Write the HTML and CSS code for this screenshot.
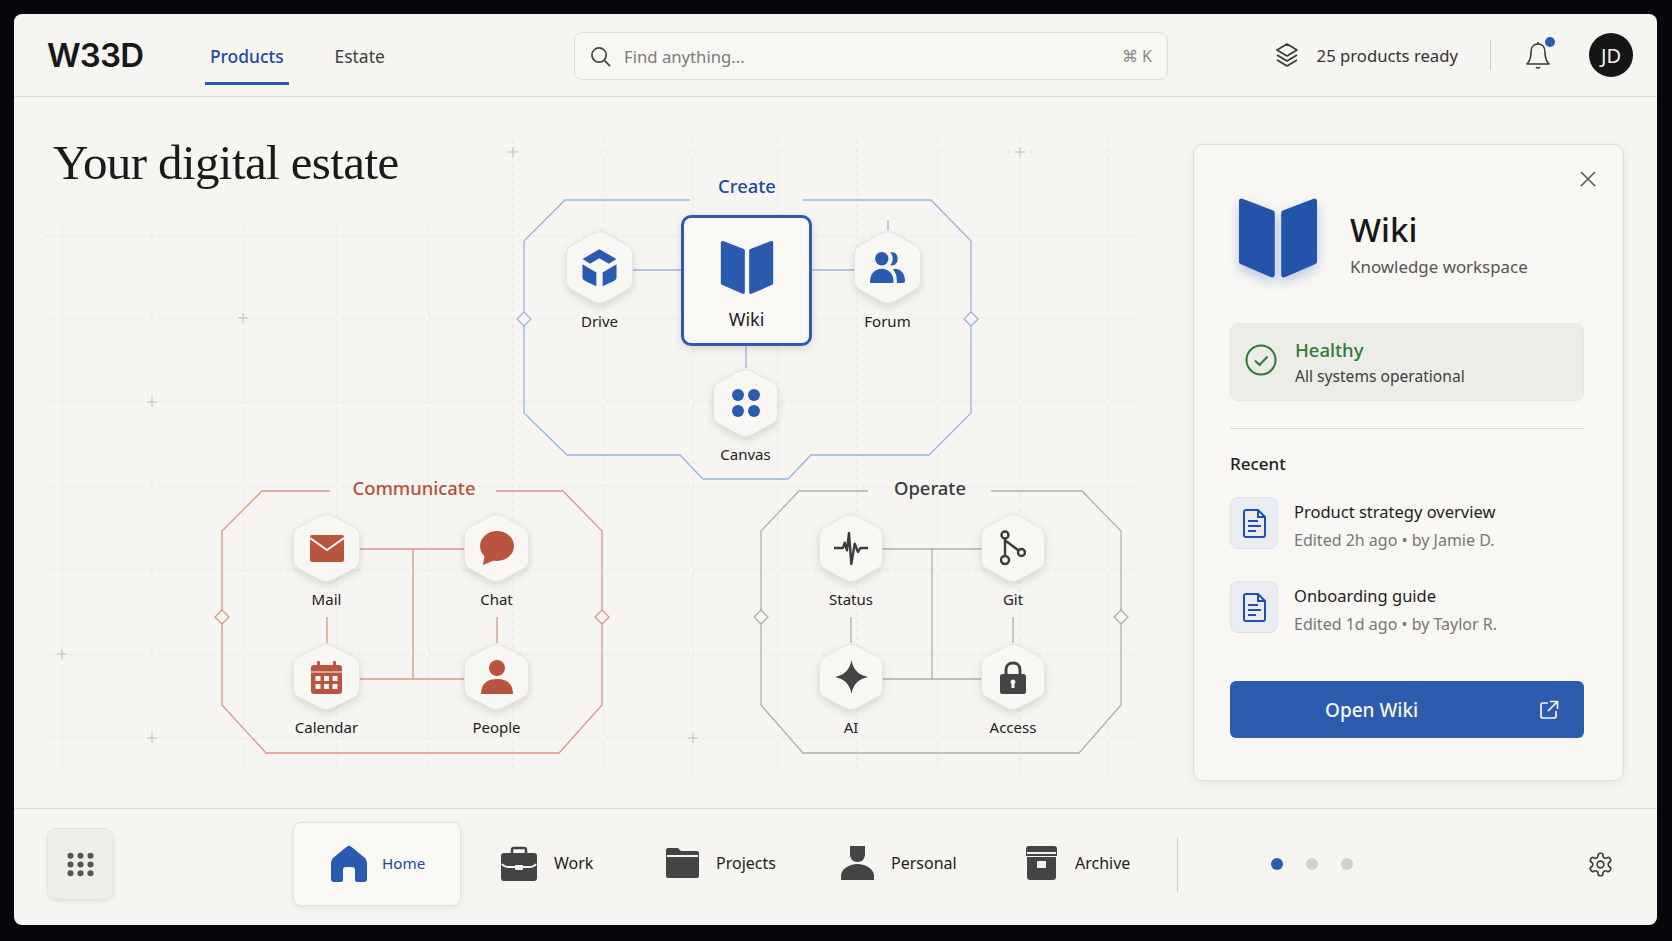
FILE: index.html
```html
<!DOCTYPE html>
<html lang="en">
<head>
    <meta charset="UTF-8">
    <meta name="viewport" content="width=device-width, initial-scale=1.0">
    <title>W33D - Your digital estate</title>
    <link rel="stylesheet" href="styles.css">
</head>
<body>
    <svg class="defs" width="0" height="0" aria-hidden="true">
        <defs>
            <symbol id="hex" viewBox="0 0 67 76" preserveAspectRatio="none">
                <path d="M28 3Q33.500 0 39 3L62 16Q66.500 19 66.500 24V52Q66.500 57 62 60L39 73Q33.500 76 28 73L5 60Q.5 57 .5 52V24Q.5 19 5 16Z"/>
            </symbol>
            <symbol id="book" viewBox="0 0 161 165">
                <path d="M7 8L69 32V157L7 130Z"/>
                <path d="M92 32L154 8V130L92 157Z"/>
            </symbol>
            <symbol id="doc" viewBox="0 0 23 29">
                <path d="M3 1H15L22 8V26Q22 28 20 28H3Q1 28 1 26V3Q1 1 3 1Z"/>
                <path d="M15 1V8H22M5 12H15M5 17H18M5 22H13"/>
            </symbol>
            <g id="plus-col">
                <path d="M-5 236H5M0 231V241M-5 318H5M0 313V323M-5 402H5M0 397V407M-5 486H5M0 481V491M-5 570H5M0 565V575M-5 654H5M0 649V659M-5 738H5M0 733V743"/>
            </g>
        </defs>
    </svg>

    <div class="frame">
        <header class="topbar">
            <div class="logo">W33D</div>
            <nav class="topnav">
                <a class="topnav-link active">Products</a>
                <a class="topnav-link">Estate</a>
            </nav>
            <div class="search">
                <svg class="search-icon" viewBox="0 0 22 22"><circle cx="9.500" cy="9.500" r="7.500"/><path d="M15 15L21 21"/></svg>
                <span class="search-text">Find anything...</span>
                <span class="search-key">⌘ K</span>
            </div>
            <div class="topbar-right">
                <svg class="layers-icon" viewBox="0 0 24 24"><path d="M12 1L22 7L12 13L2 7Z"/><path d="M2 12L12 18L22 12"/><path d="M2 17L12 23L22 17"/></svg>
                <span class="ready">25 products ready</span>
                <span class="topbar-sep"></span>
                <div class="bell">
                    <svg class="bell-icon" viewBox="0 0 24 28"><path d="M5 11C5 6 8 3 12 3S19 6 19 11C19 18 21 21 23 23H1C3 21 5 18 5 11Z"/><path d="M12 1V3M10 26Q12 28 14 26"/></svg>
                    <span class="bell-dot"></span>
                </div>
                <div class="avatar">JD</div>
            </div>
        </header>

        <main class="main">
            <section class="canvas">
                <h1 class="title">Your digital estate</h1>

                <svg class="wires" viewBox="14 97 1179 711">
                    <g class="grid">
                        <path d="M45 236H1143M45 318H1143M45 402H1143M45 486H1143M45 570H1143M45 654H1143M45 738H1143M470 152H1143"/>
                        <path d="M62 225V770M152 225V785M243 225V770M337 225V770M429 225V770M513 140V770M603 140V770M693 140V780M778 140V770M857 140V770M938 140V770M1020 140V780M1108 140V780"/>
                    </g>
                    <g class="plus">
                        <use href="#plus-col" x="62"/><use href="#plus-col" x="152"/><use href="#plus-col" x="243"/>
                        <use href="#plus-col" x="337"/><use href="#plus-col" x="429"/><use href="#plus-col" x="1108"/>
                        <use href="#plus-col" x="1020"/>
                    </g>
                    <path class="plus-strong" d="M238 318H248M243 313V323M147 402H157M152 397V407M57 654H67M62 649V659M147 738H157M152 733V743M508 152H518M513 147V157M1015 152H1025M1020 147V157M688 738H698M693 733V743"/>

                    <g class="wire-create">
                        <path d="M690 200H565L524 241V413L567 455H680L703 479H788L811 455H929L971 413V241L931 200H803"/>
                        <path d="M633 270H681M812 270H854M746 346V368M888 220V230"/>
                        <path class="pin" d="M524 312L531 319L524 326L517 319Z"/>
                        <path class="pin" d="M971 312L978 319L971 326L964 319Z"/>
                    </g>
                    <g class="wire-communicate">
                        <path d="M330 491H262L222 531V705L266 753H559L602 705V531L563 491H496"/>
                        <path d="M360 549H464M360 679H464M413 549V679M327 617V643M497 617V643"/>
                        <path class="pin" d="M222 610L229 617L222 624L215 617Z"/>
                        <path class="pin" d="M602 610L609 617L602 624L595 617Z"/>
                    </g>
                    <g class="wire-operate">
                        <path d="M868 491H799L761 531V705L803 753H1079L1121 705V531L1082 491H991"/>
                        <path d="M883 549H981M883 679H981M932 549V679M851 617V643M1013 617V643"/>
                        <path class="pin" d="M761 610L768 617L761 624L754 617Z"/>
                        <path class="pin" d="M1121 610L1128 617L1121 624L1114 617Z"/>
                    </g>
                </svg>

                <div class="group-title title-create">Create</div>
                <div class="group-title title-communicate">Communicate</div>
                <div class="group-title title-operate">Operate</div>

                <a class="wiki-card">
                    <svg class="wiki-book"><use href="#book"/></svg>
                    <span class="wiki-label">Wiki</span>
                </a>

                <a class="node tall blue node-drive">
                    <span class="hex-box">
                        <svg class="hex"><use href="#hex"/></svg>
                        <svg class="glyph g-drive" viewBox="0 0 105 115"><path d="M52 1L104 30L81 45L52 28L24 45L1 30Z"/><path d="M1 46L43 71V113L12 98Q1 93 1 86Z"/><path d="M104 46L62 71V113L93 98Q104 93 104 86Z"/></svg>
                    </span>
                    <span class="node-label">Drive</span>
                </a>
                <a class="node tall blue node-forum">
                    <span class="hex-box">
                        <svg class="hex"><use href="#hex"/></svg>
                        <svg class="glyph g-forum" viewBox="0 0 104 92"><circle cx="35" cy="20" r="20"/><path d="M3 92Q0 92 0 88C0 65 15 50 35 50S70 65 70 88Q70 92 67 92Z"/><path d="M60 1C75-2 82 8 82 20S75 42 60 39C70 30 70 10 60 1Z"/><path d="M76 50C95 52 104 68 104 86Q104 92 98 92H80C80 75 78 62 68 52Z"/></svg>
                    </span>
                    <span class="node-label">Forum</span>
                </a>
                <a class="node blue node-canvas">
                    <span class="hex-box">
                        <svg class="hex"><use href="#hex"/></svg>
                        <svg class="glyph g-dots" viewBox="0 0 28 28"><circle cx="6" cy="6" r="6"/><circle cx="22" cy="6" r="6"/><circle cx="6" cy="22" r="6"/><circle cx="22" cy="22" r="6"/></svg>
                    </span>
                    <span class="node-label">Canvas</span>
                </a>

                <a class="node red node-mail">
                    <span class="hex-box">
                        <svg class="hex"><use href="#hex"/></svg>
                        <svg class="glyph g-mail" viewBox="0 0 34 27"><rect width="34" height="27" rx="2"/><path class="cut" d="M0 3L17 15L34 3"/></svg>
                    </span>
                    <span class="node-label">Mail</span>
                </a>
                <a class="node red node-chat">
                    <span class="hex-box">
                        <svg class="hex"><use href="#hex"/></svg>
                        <svg class="glyph g-chat" viewBox="0 0 34 34"><ellipse cx="17" cy="15" rx="17" ry="15"/><path d="M5 22L3 34L15 29Z"/></svg>
                    </span>
                    <span class="node-label">Chat</span>
                </a>
                <a class="node red low node-calendar">
                    <span class="hex-box">
                        <svg class="hex"><use href="#hex"/></svg>
                        <svg class="glyph g-calendar" viewBox="0 0 31 33"><rect y="4" width="31" height="29" rx="3"/><rect x="6" width="3" height="7" rx="1"/><rect x="22" width="3" height="7" rx="1"/><path class="cut thin" d="M0 11H31"/><g class="cut-fill"><rect x="4.500" y="15" width="5" height="5"/><rect x="13" y="15" width="5" height="5"/><rect x="21.500" y="15" width="5" height="5"/><rect x="4.500" y="23" width="5" height="5"/><rect x="13" y="23" width="5" height="5"/><rect x="21.500" y="23" width="5" height="5"/></g></svg>
                    </span>
                    <span class="node-label">Calendar</span>
                </a>
                <a class="node red low node-people">
                    <span class="hex-box">
                        <svg class="hex"><use href="#hex"/></svg>
                        <svg class="glyph g-people" viewBox="0 0 32 34"><circle cx="16" cy="8" r="8"/><path d="M0 34C0 23 7 19 16 19S32 23 32 34Z"/></svg>
                    </span>
                    <span class="node-label">People</span>
                </a>

                <a class="node dark node-status">
                    <span class="hex-box">
                        <svg class="hex"><use href="#hex"/></svg>
                        <svg class="glyph g-status" viewBox="0 0 34 33"><path d="M0 16H9L10.700 10.700L13 18.300L15 1L17.300 32L20.700 11.700L24 20L26.300 16H34"/></svg>
                    </span>
                    <span class="node-label">Status</span>
                </a>
                <a class="node dark node-git">
                    <span class="hex-box">
                        <svg class="hex"><use href="#hex"/></svg>
                        <svg class="glyph g-git" viewBox="0 0 26 36"><circle cx="5" cy="5" r="3.500"/><circle cx="5" cy="30" r="4"/><circle cx="21.500" cy="22.500" r="3.500"/><path d="M5 8.500V26M6 11L18.500 20.500"/></svg>
                    </span>
                    <span class="node-label">Git</span>
                </a>
                <a class="node dark low node-ai">
                    <span class="hex-box">
                        <svg class="hex"><use href="#hex"/></svg>
                        <svg class="glyph g-ai" viewBox="0 0 33 34"><path d="M16.500 0C18 10 24 15 33 17C24 19 18 24 16.500 34C15 24 9 19 0 17C9 15 15 10 16.500 0Z"/></svg>
                    </span>
                    <span class="node-label">AI</span>
                </a>
                <a class="node dark low node-access">
                    <span class="hex-box">
                        <svg class="hex"><use href="#hex"/></svg>
                        <svg class="glyph g-lock" viewBox="0 0 26 33"><path class="shackle" d="M6 14V8.500C6 4.500 9 2 13 2S20 4.500 20 8.500V14"/><rect y="13" width="26" height="20" rx="2.500"/><path class="cut-fill" d="M13 18.500A2.500 2.500 0 0 1 14.500 23V27H11.500V23A2.500 2.500 0 0 1 13 18.500Z"/></svg>
                    </span>
                    <span class="node-label">Access</span>
                </a>
            </section>

            <aside class="panel">
                <svg class="panel-close" viewBox="0 0 16 16"><path d="M1 1L15 15M15 1L1 15"/></svg>
                <div class="panel-head">
                    <svg class="panel-book"><use href="#book"/></svg>
                    <div>
                        <h2 class="panel-name">Wiki</h2>
                        <div class="panel-sub">Knowledge workspace</div>
                    </div>
                </div>
                <div class="health">
                    <svg class="health-icon" viewBox="0 0 32 32"><circle cx="16" cy="16" r="14.500"/><path d="M10 16.500L14.500 21L22.500 12.500"/></svg>
                    <div>
                        <div class="health-title">Healthy</div>
                        <div class="health-sub">All systems operational</div>
                    </div>
                </div>
                <hr class="panel-rule">
                <div class="recent-head">Recent</div>
                <div class="recent-item">
                    <span class="doc-tile"><svg class="doc-icon"><use href="#doc"/></svg></span>
                    <div>
                        <div class="recent-title">Product strategy overview</div>
                        <div class="recent-meta">Edited 2h ago • by Jamie D.</div>
                    </div>
                </div>
                <div class="recent-item">
                    <span class="doc-tile"><svg class="doc-icon"><use href="#doc"/></svg></span>
                    <div>
                        <div class="recent-title">Onboarding guide</div>
                        <div class="recent-meta">Edited 1d ago • by Taylor R.</div>
                    </div>
                </div>
                <button class="open-btn" type="button">
                    <span class="open-text">Open Wiki</span>
                    <svg class="open-icon" viewBox="0 0 20 20"><path d="M9 3H4Q2 3 2 5V16Q2 18 4 18H15Q17 18 17 16V11"/><path d="M11 1.500H18.500V9M18 2L9 11"/></svg>
                </button>
            </aside>
        </main>

        <footer class="dock">
            <button class="apps-btn" type="button" aria-label="Apps">
                <svg class="apps-icon" viewBox="0 0 31 28"><circle cx="4" cy="4" r="3.500"/><circle cx="15.500" cy="4" r="3.500"/><circle cx="27" cy="4" r="3.500"/><circle cx="4" cy="14" r="3.500"/><circle cx="15.500" cy="14" r="3.500"/><circle cx="27" cy="14" r="3.500"/><circle cx="4" cy="24" r="3.500"/><circle cx="15.500" cy="24" r="3.500"/><circle cx="27" cy="24" r="3.500"/></svg>
            </button>
            <a class="tab tab-home">
                <svg class="tab-icon" viewBox="0 0 36 37"><path d="M16 1.500Q18 0 20 1.500L34 13Q36 15 36 18V34Q36 37 33 37H26Q24 37 24 35V25Q24 22 21 22H15Q12 22 12 25V35Q12 37 10 37H3Q0 37 0 34V18Q0 15 2 13Z"/></svg>
                <span>Home</span>
            </a>
            <a class="tab tab-work">
                <svg class="tab-icon" viewBox="0 0 36 35"><path class="handle" d="M11 8V4Q11 2 13 2H23Q25 2 25 4V8"/><rect y="7" width="36" height="28" rx="3"/><path class="cut" d="M1 18Q3 21 8 21H28Q33 21 35 18"/><rect class="cut-fill" x="14" y="19" width="8" height="5" rx="1"/></svg>
                <span>Work</span>
            </a>
            <a class="tab tab-projects">
                <svg class="tab-icon" viewBox="0 0 33 30"><path d="M2 0H12L15 3H31Q33 3 33 5V28Q33 30 31 30H2Q0 30 0 28V2Q0 0 2 0Z"/><path class="cut" d="M1 8H32"/></svg>
                <span>Projects</span>
            </a>
            <a class="tab tab-personal">
                <svg class="tab-icon" viewBox="0 0 33 34"><path d="M9 0H24V8C24 13 21 16 16.500 16S9 13 9 8Z"/><path d="M0 34V30C0 23 8 18 16.500 18S33 23 33 30V34Z"/></svg>
                <span>Personal</span>
            </a>
            <a class="tab tab-archive">
                <svg class="tab-icon" viewBox="0 0 31 34"><path d="M3 0H28Q31 0 31 3V10H0V3Q0 0 3 0Z"/><path d="M1 11H30V31Q30 34 27 34H4Q1 34 1 31Z"/><path class="cut" d="M1 7H30"/><rect class="cut-fill" x="11" y="15" width="9" height="7" rx="1"/></svg>
                <span>Archive</span>
            </a>
            <span class="dock-sep"></span>
            <div class="pager">
                <span class="pager-dot active"></span>
                <span class="pager-dot"></span>
                <span class="pager-dot"></span>
            </div>
            <svg class="gear" viewBox="0 0 24 24"><path d="M12.220 2h-.44a2 2 0 0 0-2 2v.18a2 2 0 0 1-1 1.730l-.43.25a2 2 0 0 1-2 0l-.15-.08a2 2 0 0 0-2.730.73l-.22.38a2 2 0 0 0 .73 2.730l.15.1a2 2 0 0 1 1 1.720v.51a2 2 0 0 1-1 1.740l-.15.09a2 2 0 0 0-.73 2.730l.22.38a2 2 0 0 0 2.730.73l.15-.08a2 2 0 0 1 2 0l.43.25a2 2 0 0 1 1 1.730V20a2 2 0 0 0 2 2h.44a2 2 0 0 0 2-2v-.18a2 2 0 0 1 1-1.730l.43-.25a2 2 0 0 1 2 0l.15.08a2 2 0 0 0 2.730-.73l.22-.39a2 2 0 0 0-.73-2.730l-.15-.08a2 2 0 0 1-1-1.740v-.5a2 2 0 0 1 1-1.740l.15-.09a2 2 0 0 0 .73-2.730l-.22-.38a2 2 0 0 0-2.730-.73l-.15.08a2 2 0 0 1-2 0l-.43-.25a2 2 0 0 1-1-1.730V4a2 2 0 0 0-2-2z"/><circle cx="12" cy="12" r="3"/></svg>
        </footer>
    </div>
</body>
</html>
```

FILE: styles.css
```css
* {
    box-sizing: border-box;
}

html,
body {
    height: 100%;
}

body {
    margin: 0;
    padding: 14px 15px 16px 14px;
    background-color: #05070a;
    color: #1c1c1c;
    font-family: "Noto Sans", Arial, sans-serif;
    overflow: hidden;
}

.defs {
    display: block;
}

.frame {
    display: flex;
    flex-direction: column;
    height: 911px;
    background-color: #f7f5f1;
    border-radius: 8px;
    overflow: hidden;
}

/* top bar */
.topbar {
    display: flex;
    align-items: center;
    flex: none;
    height: 83px;
    padding: 0 24px 0 33px;
    border-bottom: 1px solid #e0ddd8;
}

.logo {
    width: 158px;
    font-family: Inter, sans-serif;
    font-size: 33px;
    font-weight: 600;
    letter-spacing: -0.8px;
    color: #181818;
}

.topnav {
    display: flex;
    align-self: stretch;
    gap: 41px;
    width: 369px;
}

.topnav-link {
    display: flex;
    align-items: center;
    height: 71px;
    padding: 16px 5px 0;
    font-size: 17.400px;
    color: #3d3d3d;
    border-bottom: 3px solid transparent;
}

.topnav-link.active {
    color: #1d49a8;
    font-weight: 500;
    border-bottom-color: #2a5bb5;
}

.search {
    display: flex;
    align-items: center;
    width: 594px;
    height: 48px;
    margin-top: 2px;
    padding: 0 15px;
    background-color: #f9f7f4;
    border: 1px solid #e2dfda;
    border-radius: 8px;
}

.search-icon {
    width: 21px;
    height: 21px;
    fill: none;
    stroke: #444;
    stroke-width: 1.8;
}

.search-text {
    margin-left: 13px;
    font-size: 16.700px;
    color: #7c7c7a;
}

.search-key {
    margin-left: auto;
    font-size: 16px;
    color: #8a8a88;
}

.topbar-right {
    display: flex;
    align-items: center;
    margin-left: auto;
}

.layers-icon {
    width: 24px;
    height: 24px;
    fill: none;
    stroke: #3a3a3a;
    stroke-width: 1.7;
    stroke-linejoin: round;
}

.ready {
    margin-left: 18px;
    font-size: 16.700px;
    color: #333;
}

.topbar-sep {
    width: 1px;
    height: 30px;
    margin-left: 32px;
    background-color: #cfccc7;
}

.bell {
    position: relative;
    width: 28px;
    height: 28px;
    margin-left: 35px;
}

.bell-icon {
    width: 24px;
    height: 28px;
    fill: none;
    stroke: #3a3a3a;
    stroke-width: 1.6;
    stroke-linejoin: round;
}

.bell-dot {
    position: absolute;
    top: -4px;
    right: -1px;
    width: 10px;
    height: 10px;
    border-radius: 50%;
    background-color: #2a5bb5;
}

.avatar {
    display: flex;
    align-items: center;
    justify-content: center;
    width: 44px;
    height: 44px;
    margin-left: 35px;
    border-radius: 50%;
    background-color: #161616;
    color: #f4f2ee;
    font-size: 20px;
}

/* main area */
.main {
    display: flex;
    flex: 1;
    min-height: 0;
}

.canvas {
    position: relative;
    width: 1179px;
    flex: none;
}

.title {
    position: relative;
    z-index: 1;
    margin: 37px 0 0 39px;
    font-family: "Liberation Serif", serif;
    font-size: 49px;
    font-weight: 400;
    line-height: 58px;
    letter-spacing: -0.6px;
    color: #1a1a1a;
}

.wires {
    position: absolute;
    top: 0;
    left: 0;
    width: 1179px;
    height: 711px;
    fill: none;
}

.grid path {
    stroke: #e9e7e3;
    stroke-width: 1;
    stroke-dasharray: 4 4;
}

.plus path {
    stroke: #e0deda;
}

.plus-strong {
    stroke: #bfbfbd;
}

.wire-create path {
    stroke: #9ab4de;
    stroke-width: 1.300;
}

.wire-communicate path {
    stroke: #d9988a;
    stroke-width: 1.300;
}

.wire-operate path {
    stroke: #b0afab;
    stroke-width: 1.300;
}

.wires .pin {
    fill: #f7f5f1;
}

.group-title {
    position: absolute;
    top: 379px;
    line-height: 24px;
    font-size: 18.400px;
    font-weight: 500;
    transform: translateX(-50%);
}

.title-create {
    top: 77px;
    left: 733px;
    color: #1d49a8;
}

.title-communicate {
    left: 400px;
    color: #b5503a;
}

.title-operate {
    left: 916px;
    color: #3a3a3a;
}

.wiki-card {
    position: absolute;
    top: 118px;
    left: 667px;
    display: flex;
    flex-direction: column;
    align-items: center;
    width: 131px;
    height: 131px;
    padding-top: 22px;
    background-color: #f9f8f5;
    border: 3px solid #2a5bb5;
    border-radius: 10px;
    box-shadow: 0 3px 8px rgba(0, 0, 0, 0.12);
}

.wiki-book {
    width: 54px;
    height: 55px;
    fill: #2a5bb0;
    stroke: #2a5bb0;
    stroke-width: 10;
    stroke-linejoin: round;
}

.wiki-label {
    margin-top: 12px;
    font-size: 18px;
    line-height: 24px;
    color: #1c1c1c;
}

/* product nodes */
.node {
    position: absolute;
    display: flex;
    flex-direction: column;
    align-items: center;
    width: 67px;
    --hex-h: 70px;
}

.node.tall {
    --hex-h: 75px;
}

.node.low {
    --hex-h: 68px;
}

.node.dark {
    width: 64px;
}

.hex-box {
    display: grid;
    place-items: center;
    width: 100%;
    height: var(--hex-h);
}

.hex-box > svg {
    grid-area: 1 / 1;
}

.hex {
    width: 100%;
    height: 100%;
    fill: #f9f7f4;
    stroke: #e5e2dd;
    filter: drop-shadow(0 3px 4px rgba(0, 0, 0, 0.13));
}

.hex-box > .glyph {
    position: relative;
    z-index: 1;
}

.node-label {
    margin-top: 7px;
    font-size: 15px;
    line-height: 18px;
    white-space: nowrap;
    color: #222;
}

.blue .glyph {
    fill: #2a5bb0;
}

.red .glyph {
    fill: #b9553e;
}

.dark .glyph {
    fill: #444;
}

.glyph .cut {
    fill: none;
    stroke: #f9f7f4;
    stroke-width: 2;
}

.glyph .cut.thin {
    stroke-width: 1;
}

.glyph .cut-fill {
    fill: #f9f7f4;
}

.node-drive { top: 133px; left: 552px; }
.node-forum { top: 133px; left: 840px; }
.node-canvas { top: 271px; left: 699px; width: 65px; }
.node-mail { top: 416px; left: 279px; }
.node-chat { top: 416px; left: 450px; width: 65px; }
.node-calendar { top: 546px; left: 279px; }
.node-people { top: 546px; left: 450px; width: 65px; }
.node-status { top: 416px; left: 805px; }
.node-git { top: 416px; left: 967px; }
.node-ai { top: 546px; left: 805px; }
.node-access { top: 546px; left: 967px; }

.g-drive { width: 35px; height: 38px; }
.g-forum { width: 35px; height: 31px; }
.g-dots { width: 28px; height: 28px; }
.g-mail { width: 34px; height: 27px; }
.g-chat { width: 34px; height: 34px; }
.g-calendar { width: 31px; height: 33px; }
.g-people { width: 32px; height: 34px; }
.g-status { width: 34px; height: 33px; }
.g-git { width: 26px; height: 36px; }
.g-ai { width: 33px; height: 34px; }
.g-lock { width: 26px; height: 33px; }

.dark .g-status,
.dark .g-git {
    fill: none;
    stroke: #3c3c3c;
    stroke-width: 2.400;
    stroke-linejoin: round;
}

.dark .g-lock .shackle {
    fill: none;
    stroke: #444;
    stroke-width: 3;
}

.dark .g-lock .cut-fill {
    fill: #f9f7f4;
}

/* detail panel */
.panel {
    position: relative;
    display: flex;
    flex-direction: column;
    width: 431px;
    margin: 47px 0 27px;
    padding: 52px 39px 0 36px;
    background-color: #f9f7f4;
    border: 1px solid #e2dfda;
    border-radius: 10px;
    box-shadow: 0 2px 10px rgba(0, 0, 0, 0.07);
}

.panel-close {
    position: absolute;
    top: 26px;
    right: 27px;
    width: 16px;
    height: 16px;
    fill: none;
    stroke: #555;
    stroke-width: 1.500;
}

.panel-head {
    display: flex;
    align-items: center;
    gap: 31px;
    margin-left: 7px;
}

.panel-book {
    flex: none;
    width: 82px;
    height: 82px;
    fill: #2453ac;
    stroke: #2453ac;
    stroke-width: 10;
    stroke-linejoin: round;
    filter: drop-shadow(0 5px 6px rgba(42, 91, 176, 0.3));
}

.panel-name {
    margin: 12px 0 0;
    font-size: 33px;
    font-weight: 500;
    line-height: 40px;
    color: #181818;
}

.panel-sub {
    margin-top: 5px;
    font-size: 16.900px;
    line-height: 24px;
    color: #555;
}

.health {
    display: flex;
    align-items: center;
    gap: 18px;
    height: 78px;
    margin-top: 44px;
    padding-left: 14px;
    background-color: #ecede7;
    border: 1px solid #e6e7e0;
    border-radius: 8px;
}

.health-icon {
    flex: none;
    width: 32px;
    height: 32px;
    margin-top: -4px;
    fill: none;
    stroke: #2f7a35;
    stroke-width: 2;
}

.health-title {
    font-size: 18.500px;
    font-weight: 500;
    line-height: 25px;
    color: #2f7a35;
}

.health-sub {
    margin-top: 3px;
    font-size: 15.600px;
    line-height: 22px;
    color: #3e3e3e;
}

.panel-rule {
    width: 100%;
    margin: 27px 0 0;
    border: 0;
    border-top: 1px solid #dcd9d4;
}

.recent-head {
    margin-top: 23px;
    font-size: 17px;
    font-weight: 500;
    line-height: 24px;
    color: #1e1e1e;
}

.recent-item {
    display: flex;
    align-items: center;
    gap: 16px;
    height: 52px;
}

.recent-head + .recent-item {
    margin-top: 21px;
}

.recent-item + .recent-item {
    margin-top: 32px;
}

.doc-tile {
    display: flex;
    align-items: center;
    justify-content: center;
    flex: none;
    width: 48px;
    height: 52px;
    background-color: #e9ecf1;
    border: 1px solid #dde1e8;
    border-radius: 8px;
}

.doc-icon {
    width: 23px;
    height: 29px;
    fill: none;
    stroke: #2050ad;
    stroke-width: 2;
}

.recent-title {
    margin-top: 4px;
    font-size: 16.500px;
    line-height: 24px;
    color: #1e1e1e;
}

.recent-meta {
    margin-top: 5px;
    font-size: 16px;
    line-height: 22px;
    color: #777;
}

.open-btn {
    display: flex;
    align-items: center;
    justify-content: space-between;
    height: 57px;
    margin-top: 48px;
    padding: 0 25px 0 95px;
    background-color: #2d5cae;
    border: 0;
    border-radius: 6px;
    color: #f7f6f3;
    font-family: inherit;
    font-size: 19px;
    font-weight: 500;
}

.open-icon {
    width: 20px;
    height: 20px;
    fill: none;
    stroke: #f7f6f3;
    stroke-width: 1.700;
}

/* bottom dock */
.dock {
    display: flex;
    align-items: center;
    flex: none;
    height: 117px;
    padding: 0 43px 6px 33px;
    border-top: 1px solid #e0ddd8;
}

.apps-btn {
    display: flex;
    align-items: center;
    justify-content: center;
    flex: none;
    width: 67px;
    height: 72px;
    margin-right: 179px;
    background-color: #efedea;
    border: 1px solid #e6e3de;
    border-radius: 10px;
    box-shadow: 0 2px 5px rgba(0, 0, 0, 0.07);
}

.apps-icon {
    width: 27px;
    height: 25px;
    fill: #555;
}

.tab {
    display: flex;
    align-items: center;
    flex: none;
    gap: 17px;
    font-size: 16px;
    color: #222;
}

.tab span {
    margin-top: -2px;
}

.tab-icon {
    flex: none;
    margin-top: -2px;
    fill: #444;
}

.tab-home {
    gap: 15px;
    width: 168px;
    height: 84px;
    margin-right: 40px;
    padding-left: 37px;
    background-color: #f9f8f5;
    border: 1px solid #e4e1dc;
    border-radius: 8px;
    box-shadow: 0 2px 6px rgba(0, 0, 0, 0.08);
    color: #1d49a8;
    font-size: 15.200px;
}

.tab-home .tab-icon {
    width: 36px;
    height: 37px;
    fill: #2a5bb0;
}

.tab-work { width: 165px; }
.tab-projects { width: 175px; }
.tab-personal { width: 185px; }
.tab-archive { gap: 18px; width: 151px; }

.tab-work .tab-icon { width: 36px; height: 35px; }
.tab-projects .tab-icon { width: 33px; height: 30px; }
.tab-personal .tab-icon { width: 33px; height: 34px; }
.tab-archive .tab-icon { width: 31px; height: 34px; }

.tab-icon .handle {
    fill: none;
    stroke: #444;
    stroke-width: 2.500;
}

.tab-icon .cut {
    fill: none;
    stroke: #f7f5f1;
    stroke-width: 2;
}

.tab-icon .cut-fill {
    fill: #f7f5f1;
}

.dock-sep {
    flex: none;
    width: 1px;
    height: 55px;
    background-color: #cfccc7;
}

.pager {
    display: flex;
    gap: 23px;
    margin-left: 93px;
}

.pager-dot {
    width: 12px;
    height: 12px;
    border-radius: 50%;
    background-color: #d3d1cd;
}

.pager-dot.active {
    background-color: #2a5bb5;
}

.gear {
    width: 27px;
    height: 27px;
    margin-left: auto;
    fill: none;
    stroke: #3f3f3f;
    stroke-width: 1.500;
}
```
